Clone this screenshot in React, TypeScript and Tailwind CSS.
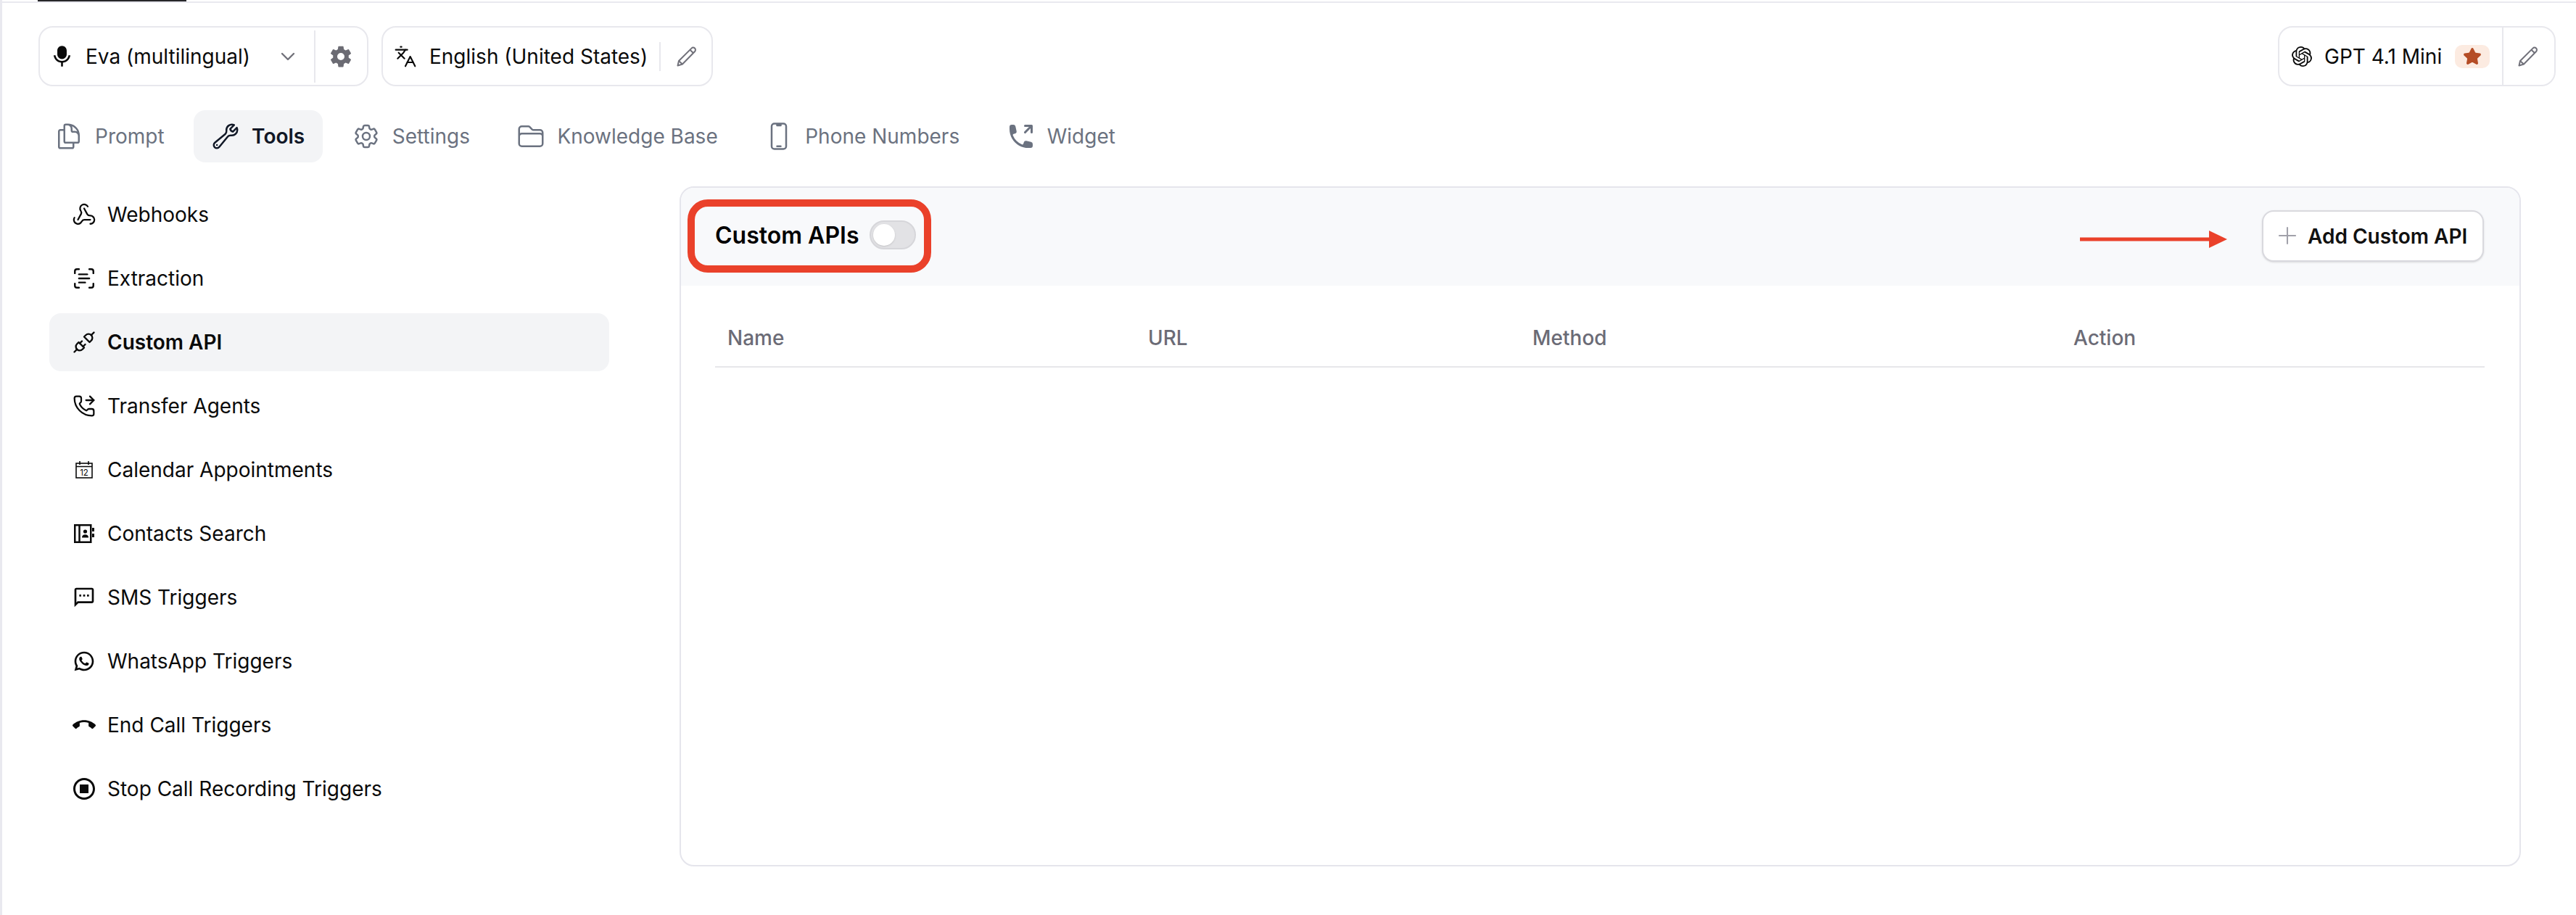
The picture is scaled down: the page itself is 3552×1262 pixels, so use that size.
import React from 'react';
import { ChevronDown, Languages, Plus, Star, Webhook, ScanText, PhoneForwarded } from 'lucide-react';
import { TbPlugConnected } from 'react-icons/tb';
import { RiMicFill, RiWhatsappLine } from 'react-icons/ri';
import { MdOutlineSms, MdCallEnd, MdOutlineStopCircle } from 'react-icons/md';
import { IoSettingsSharp } from 'react-icons/io5';
import { SiOpenai } from 'react-icons/si';
import {
  HiOutlineDocumentDuplicate,
  HiOutlineWrench,
  HiOutlineCog6Tooth,
  HiOutlineFolder,
  HiOutlineDevicePhoneMobile,
  HiMiniPhoneArrowUpRight,
} from 'react-icons/hi2';

const PenIcon = () => (
  <svg viewBox="0 0 28 28" fill="none" stroke="currentColor" strokeWidth={2} strokeLinejoin="round" className="w-[28px] h-[28px] shrink-0">
    <path d="M1.5 26.5 3 20 20.5 2.6a3 3 0 0 1 4.6 4.4L8 24.5Z" />
    <path d="M18.5 4.8l4.6 4.4M3 20l5 4.5" />
  </svg>
);

const CalendarIcon = () => (
  <svg viewBox="0 0 24 24" fill="none" stroke="currentColor" strokeWidth={1.6} className="w-[24px] h-[24px]">
    <rect x="1" y="3" width="22" height="20" />
    <path d="M1 7.5h22M6 0v5M18 0v5" />
    <text x="12" y="20" textAnchor="middle" fill="currentColor" stroke="none" fontSize="11.5" fontFamily="Inter, sans-serif">12</text>
  </svg>
);

const ContactsIcon = () => (
  <svg viewBox="0 0 28 26" fill="none" stroke="currentColor" strokeWidth={2.5} className="w-[28px] h-[26px]">
    <rect x="1.25" y="1.25" width="22" height="23.5" />
    <path d="M7.5 1.25v23.5" />
    <circle cx="15.5" cy="10" r="2.6" fill="currentColor" stroke="none" />
    <path d="M11 18.5c0-3 2-4.2 4.5-4.2s4.5 1.2 4.5 4.2Z" fill="currentColor" stroke="none" />
    <path d="M26.5 5v5M26.5 13v5" strokeWidth={3} />
  </svg>
);

const navItems = [
  { label: 'Webhooks', icon: <Webhook className="w-[34px] h-[34px]" strokeWidth={1.6} /> },
  { label: 'Extraction', icon: <ScanText className="w-[34px] h-[34px]" strokeWidth={1.7} /> },
  { label: 'Custom API', icon: <TbPlugConnected className="w-[36px] h-[36px] shrink-0" strokeWidth={1.6} />, active: true },
  { label: 'Transfer Agents', icon: <PhoneForwarded className="w-[32px] h-[32px]" strokeWidth={1.7} /> },
  { label: 'Calendar Appointments', icon: <CalendarIcon /> },
  { label: 'Contacts Search', icon: <ContactsIcon /> },
  { label: 'SMS Triggers', icon: <MdOutlineSms className="w-[32px] h-[32px]" /> },
  { label: 'WhatsApp Triggers', icon: <RiWhatsappLine className="w-[32px] h-[32px]" /> },
  { label: 'End Call Triggers', icon: <MdCallEnd className="w-[32px] h-[32px]" /> },
  { label: 'Stop Call Recording Triggers', icon: <MdOutlineStopCircle className="w-[36px] h-[36px] shrink-0" /> },
];

const tabs = [
  { label: 'Prompt', icon: <HiOutlineDocumentDuplicate className="w-[40px] h-[40px] shrink-0" /> },
  { label: 'Tools', icon: <HiOutlineWrench className="w-[40px] h-[40px] shrink-0" />, active: true },
  { label: 'Settings', icon: <HiOutlineCog6Tooth className="w-[40px] h-[40px] shrink-0" /> },
  { label: 'Knowledge Base', icon: <HiOutlineFolder className="w-[40px] h-[40px] shrink-0" /> },
  { label: 'Phone Numbers', icon: <HiOutlineDevicePhoneMobile className="w-[40px] h-[40px] shrink-0" /> },
  { label: 'Widget', icon: <HiMiniPhoneArrowUpRight className="w-[40px] h-[40px] shrink-0" /> },
];

const App: React.FC = () => {
  return (
    <div className="min-h-[1262px] bg-white border-l-[3px] border-[#e9e9ef] font-['Inter',sans-serif] text-[#0a0a0a] text-[28px]">
      {/* Top rule with the active page tab */}
      <div className="h-[4px] border-b-2 border-[#e9e9ef]">
        <div className="ml-[49px] w-[205px] h-[2px] bg-[#27272a]" />
      </div>

      {/* Voice, language and model */}
      <div className="flex items-center justify-between pl-[50px] pr-[28px] pt-[32px]">
        <div className="flex gap-[18px]">
          <div className="flex items-center h-[83px] w-[455px] rounded-[20px] border-2 border-[#e8e8ed] pl-[15px]">
            <RiMicFill className="w-[31px] h-[31px] shrink-0" />
            <span className="ml-[17px]">Eva (multilingual)</span>
            <ChevronDown className="ml-[36px] w-[32px] h-[32px] shrink-0 text-[#71717a]" strokeWidth={1.8} />
            <div className="ml-[20px] w-[2px] h-[72px] bg-[#e8e8ed]" />
            <IoSettingsSharp className="ml-[19px] w-[32px] h-[32px] shrink-0 text-[#6b6b73]" />
          </div>
          <div className="flex items-center h-[83px] w-[457px] rounded-[20px] border-2 border-[#e8e8ed] pl-[15px]">
            <Languages className="w-[32px] h-[32px] shrink-0" strokeWidth={1.6} />
            <span className="ml-[17px]">English (United States)</span>
            <div className="ml-[16px] w-[2px] h-[40px] bg-[#e8e8ed]" />
            <span className="ml-[22px] text-[#71717a]">
              <PenIcon />
            </span>
          </div>
        </div>
        <div className="flex items-center h-[83px] w-[383px] rounded-[20px] border-2 border-[#e8e8ed] pl-[17px]">
          <SiOpenai className="w-[28px] h-[28px] shrink-0" />
          <span className="ml-[17px] whitespace-nowrap">GPT 4.1 Mini</span>
          <div className="ml-[18px] flex items-center justify-center w-[48px] h-[32px] shrink-0 rounded-[10px] bg-[#fcebe1]">
            <Star className="w-[26px] h-[26px] text-[#b54d26]" fill="currentColor" />
          </div>
          <div className="ml-[17px] w-[2px] h-[79px] bg-[#e8e8ed]" />
          <span className="ml-[20px] text-[#71717a]">
            <PenIcon />
          </span>
        </div>
      </div>

      {/* Tabs */}
      <div className="flex items-center gap-[15.5px] pl-[48px] mt-[33px]">
        {tabs.map((tab) => (
          <div
            key={tab.label}
            className={`flex items-center gap-[18px] h-[72px] pl-[26px] pr-[25px] rounded-[16px] ${
              tab.active ? 'bg-[#f3f4f6] font-semibold text-[#111827]' : 'text-[#6b7280]'
            }`}
          >
            <span className="flex items-center justify-center w-[36px]">{tab.icon}</span>
            <span className="whitespace-nowrap">{tab.label}</span>
          </div>
        ))}
      </div>

      <div className="flex pl-[65px] pr-[76px] mt-[33px]">
        {/* Sidebar */}
        <div className="w-[772px] shrink-0 flex flex-col gap-[8px] -mt-px">
          {navItems.map((item) => (
            <div
              key={item.label}
              className={`flex items-center h-[80px] rounded-[16px] pl-[31px] ${
                item.active ? 'bg-[#f3f4f6] font-semibold' : ''
              }`}
            >
              <span className="flex items-center justify-center w-[34px]">{item.icon}</span>
              <span className="ml-[15px]">{item.label}</span>
            </div>
          ))}
        </div>

        {/* Custom API panel */}
        <div className="ml-[97px] flex-1 h-[938px] rounded-[20px] border-2 border-[#e5e5ec] overflow-hidden">
          <div className="flex items-center justify-between h-[135px] pb-[3px] bg-[#f8f9fb] pl-[9px] pr-[49px]">
            <div className="flex items-center h-[101px] w-[336px] rounded-[28px] border-[10px] border-[#ea412a] pl-[28px]">
              <span className="text-[32px] font-semibold text-black whitespace-nowrap">Custom APIs</span>
              <span className="relative ml-[15px] -mt-[3px] w-[64px] h-[40px] shrink-0 rounded-full bg-[#e2e2e5] border-2 border-[#d6d6da]">
                <span className="absolute left-[3px] top-[3px] w-[30px] h-[30px] rounded-full bg-white shadow-sm" />
              </span>
            </div>
            <div className="flex items-center gap-[48px]">
              <svg viewBox="0 0 203 24" className="w-[203px] h-[24px] mt-[10px]">
                <path d="M0 9.5h178v5H0z" fill="#ea412a" />
                <path d="M178 0l25 12-25 12z" fill="#ea412a" />
              </svg>
              <div className="flex items-center h-[71px] w-[306px] rounded-[16px] bg-white border-2 border-[#d9d9de] shadow-sm pl-[14px]">
                <Plus className="w-[38px] h-[38px] shrink-0 text-[#a1a1aa]" strokeWidth={1.3} />
                <span className="ml-[9px] mt-[2px] font-semibold text-[#111111] whitespace-nowrap">Add Custom API</span>
              </div>
            </div>
          </div>

          <div className="ml-[47px] mr-[48px] mt-[51px] pb-[18px] grid grid-cols-[580px_530px_746px_1fr] pl-[17px] border-b-2 border-[#e7e7ea] font-medium text-[#6b6b76]">
            <span>Name</span>
            <span>URL</span>
            <span>Method</span>
            <span>Action</span>
          </div>
        </div>
      </div>
    </div>
  );
};

export default App;
